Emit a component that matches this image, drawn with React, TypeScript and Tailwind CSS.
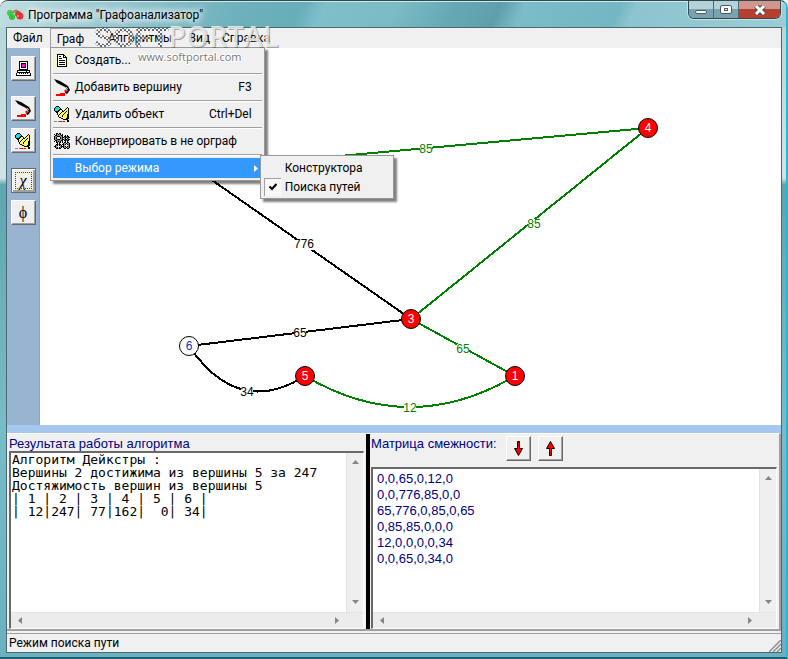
import { useState } from "react";
import type { ReactNode } from "react";

const PALETTE: Record<string, string> = {
  k: "#000000",
  w: "#ffffff",
  g: "#8a8a8a",
  d: "#404040",
  y: "#ffff4d",
  c: "#00e5e5",
  m: "#ff00ff",
  r: "#ff0000",
};

const PRINTER = [
  "...kkkkkkkkk...",
  "...kwwwwwwwk...",
  "...kwkkkkkwk...",
  "...kwkmmmkwk...",
  "...kwkmcmkwk...",
  "...kwkmmmkwk...",
  "...kwkkkkkwk...",
  "...kwwwwwwwk...",
  "...kkkkkkkkk...",
  ".kkkkkkkkkkkkk.",
  ".kwwwwwwwwkwwk.",
  ".kkkkkkkkkkkkk.",
  "kwwkwkwkwkwkwwk",
  "kwwwwwwwwwwwwwk",
  "kkkkkkkkkkkkkkk",
];

const ERASER = [
  "..kkk...........",
  ".kccck.......k..",
  "kccccck.....kyk.",
  "kcccckkk...kyyk.",
  "kccckkwyk.kyyyk.",
  ".kkkkwyykkyykyk.",
  "..kkwyykyyykyyk.",
  "...kyykyyykyyyk.",
  "...kykyyykyyykk.",
  "....kyyykyyyykk.",
  "....kwyykyyyykk.",
  ".....kkyyyyyykk.",
  ".......kkyyykkk.",
  ".........kkkkk..",
  ".............kk.",
  "ggg.grrrgrr..kk.",
];

const PAGE = [
  "y....y....y....y",
  ".y.kkkkkkk....y.",
  "..ykwwwwwkk..y..",
  "...kwkkwwkwk....",
  "...kwwwwwkkkk...",
  "yy.kwkkkwwwwk..y",
  "..ykwwwwwwwwkyy.",
  "...kwkkkkkkwk...",
  "..ykwwwwwwwwk...",
  "yy.kwkkkkkkwkyy.",
  "...kwwwwwwwwk..y",
  "...kwkkkkkkwk...",
  "..ykwwwwwwwwky..",
  ".y.kkkkkkkkkk.y.",
  "y....y...y.....y",
];

const GEARS = [
  "..kk.kk.........",
  "k.kgkgk.k.......",
  ".kkggggkk..k.k..",
  "kggkkkggk.kkgkk.",
  "kgk...kgkkgkkgkk",
  "kgk...kgk.gk.kg.",
  "kggkkkggkkgkkgkk",
  ".kkggggkk.kkgkk.",
  "k.kgkgk.k..k.k..",
  "..kk.kk.k.kk.kk.",
  "...k.k...kggkggk",
  "..kkgkk.kkgk.kgk",
  ".kgk.kgk.kg...gk",
  "kkg...gkkkgk.kgk",
  ".kgk.kgk.kggkggk",
  "..kkgkk...kk.kk.",
];

function PixelIcon({ rows }: { rows: string[] }) {
  return (
    <svg width={rows[0].length} height={rows.length} shapeRendering="crispEdges" aria-hidden="true">
      {rows.map((row, y) =>
        row
          .split("")
          .map((ch, x) => (ch === "." ? null : <rect key={`${x}-${y}`} x={x} y={y} width="1" height="1" fill={PALETTE[ch]} />)),
      )}
    </svg>
  );
}

function ArmIcon() {
  return (
    <svg width="17" height="17" aria-hidden="true">
      <path d="M0 0 L6 2 L14 7 L16 11 L13 15 L11 14 L13 10 L11 8 L3 4 Z" fill="#000" />
      <path d="M12 8 L14 10 L12 13" fill="none" stroke="#fff" strokeWidth="1" strokeDasharray="1 1" />
      <path d="M11 11 L12 13" stroke="#f00" strokeWidth="2" />
      <path d="M6 14 H11 V15 H6 Z M2 15 H11 V17 H2 Z" fill="#f00" />
    </svg>
  );
}

function BevelButton({ label, children, selected }: { label: string; children: ReactNode; selected?: boolean }) {
  return (
    <button
      aria-label={label}
      className={`flex h-[25px] w-[25px] shrink-0 items-center justify-center border bg-[#f0f0f0] ${
        selected
          ? "border-[#696969] shadow-[inset_1px_1px_0_#fff,inset_-2px_-2px_0_#a0a0a0]"
          : "border-t-white border-l-white border-r-[#696969] border-b-[#696969] shadow-[inset_-1px_-1px_0_#a0a0a0]"
      }`}
    >
      {children}
    </button>
  );
}

const NODES = [
  { id: 4, x: 608, y: 80, hit: true },
  { id: 3, x: 371, y: 271, hit: true },
  { id: 6, x: 149, y: 298, hit: false },
  { id: 5, x: 265, y: 328, hit: true },
  { id: 1, x: 475, y: 328, hit: true },
  { id: 2, x: 156, y: 121, hit: true },
];

const GREEN = "#008000";
const BLACK = "#000000";

const EDGES = [
  { d: "M156 121 L608 80", weight: "85", x: 386, y: 101, color: GREEN },
  { d: "M608 80 L371 271", weight: "85", x: 494, y: 176, color: GREEN },
  { d: "M156 121 L371 271", weight: "776", x: 264, y: 196, color: BLACK },
  { d: "M149 298 L371 271", weight: "65", x: 260, y: 285, color: BLACK },
  { d: "M371 271 L475 328", weight: "65", x: 423, y: 301, color: GREEN },
  { d: "M149 298 Q198 370 265 328", weight: "34", x: 207, y: 344, color: BLACK },
  { d: "M265 328 Q370 390 475 328", weight: "12", x: 370, y: 360, color: GREEN },
];

function GraphCanvas() {
  return (
    <svg className="h-full w-full bg-white font-['Liberation_Sans',sans-serif] text-xs" role="img" aria-label="Граф">
      {EDGES.map((e) => (
        <g key={e.d}>
          <path d={e.d} fill="none" stroke={e.color} strokeWidth="2" shapeRendering="crispEdges" />
          <rect x={e.x - e.weight.length * 3} y={e.y - 5} width={e.weight.length * 6} height="11" fill="#fff" />
          <text x={e.x} y={e.y + 4} textAnchor="middle" fill={e.color}>
            {e.weight}
          </text>
        </g>
      ))}
      {NODES.map((n) => (
        <g key={n.id}>
          <circle cx={n.x} cy={n.y} r="9.5" fill={n.hit ? "#ff0000" : "#fff"} stroke="#000" />
          <text x={n.x} y={n.y + 4} textAnchor="middle" fill={n.hit ? "#fff" : "#0033cc"}>
            {n.id}
          </text>
        </g>
      ))}
    </svg>
  );
}

function Arrow({ dir }: { dir: "up" | "down" | "left" | "right" }) {
  const points = {
    up: "0,5 7,5 3.5,1",
    down: "0,1 7,1 3.5,5",
    left: "5,0 5,7 1,3.5",
    right: "1,0 1,7 5,3.5",
  };
  return (
    <svg width="7" height="7" aria-hidden="true">
      <polygon points={points[dir]} fill="#858585" />
    </svg>
  );
}

function Memo({ label, value, className }: { label: string; value: string; className: string }) {
  return (
    <div className="flex min-h-0 flex-1 flex-col border-t-2 border-l-2 border-r border-b border-t-[#696969] border-l-[#696969] border-r-white border-b-white bg-white">
      <div className="flex min-h-0 flex-1">
        <textarea
          aria-label={label}
          readOnly
          wrap="off"
          defaultValue={value}
          className={`min-w-0 flex-1 resize-none overflow-hidden bg-white outline-none ${className}`}
        />
        <div className="flex w-[17px] flex-col items-center justify-between border-l border-[#e3e3e3] bg-[#efefef] py-1.5">
          <Arrow dir="up" />
          <Arrow dir="down" />
        </div>
      </div>
      <div className="flex h-4 shrink-0 items-center justify-between border-t border-[#e3e3e3] bg-[#ececec] pr-[22px] pl-1.5">
        <Arrow dir="left" />
        <Arrow dir="right" />
      </div>
    </div>
  );
}

function MenuItem({ icon, text, hotkey }: { icon: ReactNode; text: string; hotkey?: string }) {
  return (
    <button role="menuitem" className="flex h-5 w-full items-center pr-2.5 text-left">
      <span className="flex w-[22px] shrink-0 items-center pl-px">{icon}</span>
      <span className="flex-1 whitespace-nowrap">{text}</span>
      {hotkey && <span>{hotkey}</span>}
    </button>
  );
}

function Separator() {
  return (
    <div className="flex h-[7px] items-center">
      <div className="h-0.5 w-full border-t border-[#a0a0a0] bg-white" />
    </div>
  );
}

function GraphMenu({ mode, setMode }: { mode: string; setMode: (m: string) => void }) {
  return (
    <div
      role="menu"
      className="absolute top-full left-0 z-20 -mt-px w-[215px] border border-[#979797] bg-[#f0f0f0] p-0.5 shadow-[3px_3px_2px_#00000080]"
    >
      <MenuItem icon={<PixelIcon rows={PAGE} />} text="Создать..." />
      <Separator />
      <MenuItem icon={<ArmIcon />} text="Добавить вершину" hotkey="F3" />
      <Separator />
      <MenuItem icon={<PixelIcon rows={ERASER} />} text="Удалить объект" hotkey="Ctrl+Del" />
      <Separator />
      <MenuItem icon={<PixelIcon rows={GEARS} />} text="Конвертировать в не орграф" />
      <Separator />
      <div className="relative">
        <button role="menuitem" className="flex h-5 w-full items-center bg-[#3399ff] pr-1 pl-[22px] text-left text-white">
          <span className="flex-1">Выбор режима</span>
          <svg width="4" height="7" aria-hidden="true">
            <polygon points="0,0 4,3.5 0,7" fill="#fff" />
          </svg>
        </button>
        <div
          role="menu"
          className="absolute -top-[3px] left-[207px] w-[134px] border border-[#979797] bg-[#f0f0f0] p-0.5 shadow-[3px_3px_2px_#00000080]"
        >
          {["Конструктора", "Поиска путей"].map((name) => (
            <button
              key={name}
              role="menuitemradio"
              aria-checked={mode === name}
              onClick={() => setMode(name)}
              className="flex h-[19px] w-full items-center gap-1 text-left"
            >
              <span
                className={`ml-px flex h-[18px] w-[17px] items-center justify-center ${
                  mode === name ? "border-t border-l border-[#a0a0a0] bg-[#f8f8f8]" : ""
                }`}
              >
                {mode === name && (
                  <svg width="8" height="8" aria-hidden="true">
                    <path d="M0.5 3.5 L3 6 L7.5 1" fill="none" stroke="#000" strokeWidth="2" />
                  </svg>
                )}
              </span>
              <span className="whitespace-nowrap">{name}</span>
            </button>
          ))}
        </div>
      </div>
    </div>
  );
}

function Watermark() {
  return (
    <svg className="pointer-events-none absolute top-5 left-[92px] z-30 overflow-visible" width="192" height="46" aria-hidden="true">
      <defs>
        <pattern id="dots" width="4" height="4" patternUnits="userSpaceOnUse">
          <rect width="4" height="4" fill="#fff" fillOpacity="0.6" />
          <rect width="2" height="2" fill="#5f6669" />
          <rect x="2" y="2" width="2" height="2" fill="#5f6669" />
        </pattern>
      </defs>
      <text x="2" y="26" fill="url(#dots)" className="font-['Liberation_Sans',sans-serif] text-[28px] font-bold">
        SOFT
      </text>
      <g className="font-['Open_Sans',sans-serif] text-[29px] font-semibold">
        <text x="77" y="27" fill="#555" fillOpacity="0.5">
          PORTAL
        </text>
        <text x="76" y="26" fill="#f4f6f6" fillOpacity="0.8">
          PORTAL
        </text>
      </g>
      <text
        x="46"
        y="40"
        className="font-['Open_Sans',sans-serif] text-[11px]"
        fill="#777"
        stroke="#fff"
        strokeWidth="2"
        paintOrder="stroke"
      >
        www.softportal.com
      </text>
    </svg>
  );
}

function TitleBar() {
  return (
    <header className="-mr-1 -ml-1.5 flex h-[26px] shrink-0 items-start justify-between rounded-t-lg border-t border-[#d5e8ea] bg-[linear-gradient(115deg,#c4dee1_0%,#9ccbd2_12%,#6fb1bc_30%,#68adb9_38%,#7fbfca_41%,#7bbbc6_50%,#66a9b4_57%,#5f9fab_63%,#7bbcc8_66%,#74b6c3_78%,#8cc4cf_80%,#9ccdd5_100%)] pl-[7px]">
      <div className="flex h-full items-center gap-1">
        <svg width="17" height="14" aria-hidden="true">
          <circle cx="3" cy="5" r="3" fill="#3ccf3c" />
          <circle cx="5" cy="9" r="3" fill="#35c235" />
          <path d="M6 5 Q9 0 12 5" fill="none" stroke="#c07050" strokeWidth="2" />
          <circle cx="11" cy="6" r="3" fill="#c04a3a" />
          <circle cx="13" cy="8" r="3.5" fill="#e03030" />
          <circle cx="11" cy="8" r="1" fill="#ff9a9a" />
        </svg>
        <h1 className="whitespace-nowrap [text-shadow:0_0_6px_#fff,0_0_8px_#fff,0_0_10px_#fff]">Программа "Графоанализатор"</h1>
      </div>
      <div className="mr-[5px] -mt-px flex h-[18px] overflow-hidden rounded-b-md border border-t-0 border-[#34474d] shadow-[0_0_0_1px_#c5e1e6]">
        <button
          aria-label="Свернуть"
          className="flex w-[25px] items-center justify-center border-r border-[#4d6a72] bg-linear-to-b from-[#b5d2d8] from-50% to-[#78a3ae] to-50%"
        >
          <span className="mt-1 h-1 w-3 rounded-xs border border-[#4c5a60] bg-white" />
        </button>
        <button
          aria-label="Развернуть"
          className="flex w-[25px] items-center justify-center border-r border-[#4d6a72] bg-linear-to-b from-[#b5d2d8] from-50% to-[#78a3ae] to-50%"
        >
          <span className="flex h-[9px] w-3 items-center justify-center rounded-xs border border-[#4c5a60] bg-white">
            <span className="h-[3px] w-1 border border-[#4c5a60]" />
          </span>
        </button>
        <button
          aria-label="Закрыть"
          className="flex w-[41px] items-center justify-center bg-linear-to-b from-[#d3968c] from-50% to-[#b5402f] to-50%"
        >
          <svg width="12" height="10" aria-hidden="true">
            <path d="M2 1 L10 9 M10 1 L2 9" stroke="#4c4c55" strokeWidth="5" />
            <path d="M2 1 L10 9 M10 1 L2 9" stroke="#fff" strokeWidth="3" />
          </svg>
        </button>
      </div>
    </header>
  );
}

const RESULT = `Алгоритм Дейкстры :
Вершины 2 достижима из вершины 5 за 247
Достяжимость вершин из вершины 5
| 1 | 2 | 3 | 4 | 5 | 6 |
| 12|247| 77|162|  0| 34|`;

const MATRIX = `0,0,65,0,12,0
0,0,776,85,0,0
65,776,0,85,0,65
0,85,85,0,0,0
12,0,0,0,0,34
0,0,65,0,34,0`;

export default function App() {
  const [menuOpen, setMenuOpen] = useState(true);
  const [mode, setMode] = useState("Поиска путей");

  return (
    <div className="relative flex h-screen flex-col overflow-hidden rounded-t-lg border-t border-r-2 border-b-2 border-t-[#2b4a50] border-r-[#1fb9dd] border-b-[#1b5f70] bg-[linear-gradient(to_bottom,#b4d4d8_0%,#cfe4e6_27%,#5fa5b0_28%,#78bcc8_65%,#6ab0be_100%)] pr-1 pb-1 pl-1.5 font-[Roboto,'Noto_Sans',sans-serif] text-xs text-black">
      <TitleBar />
      <div className="flex min-h-0 flex-1 flex-col border border-[#4a6a72] bg-[#f0f0f0]">
        <nav className="flex h-5 shrink-0 items-stretch">
          <button className="pr-[7px] pl-1.5">Файл</button>
          <div className="relative">
            <button
              onClick={() => setMenuOpen(!menuOpen)}
              className="h-full border-t border-l border-[#a0a0a0] pr-3 pl-1.5"
            >
              Граф
            </button>
            {menuOpen && <GraphMenu mode={mode} setMode={setMode} />}
          </div>
          <button className="pr-2 pl-3">Алгоритмы</button>
          <button className="px-2">Вид</button>
          <button className="px-1">Справка</button>
        </nav>

        <div className="flex min-h-0 flex-1">
          <aside className="flex w-[33px] shrink-0 flex-col items-center gap-[7px] border-r border-[#a0a0a0] bg-[#99b4d1] pt-2">
            <BevelButton label="Печать">
              <PixelIcon rows={PRINTER} />
            </BevelButton>
            <div className="mt-2">
              <BevelButton label="Добавить вершину">
                <ArmIcon />
              </BevelButton>
            </div>
            <BevelButton label="Удалить объект">
              <PixelIcon rows={ERASER} />
            </BevelButton>
            <div className="mt-2">
              <BevelButton label="Хроматическое число" selected>
                <span className="flex h-[17px] w-[17px] items-center justify-center border border-dotted border-black font-['Liberation_Serif',serif] text-base leading-none italic outline-1 -outline-offset-1 outline-[#ffff00]/30">
                  χ
                </span>
              </BevelButton>
            </div>
            <BevelButton label="Число независимости">
              <span className="font-['Liberation_Serif','DejaVu_Serif',serif] text-base leading-none">ϕ</span>
            </BevelButton>
          </aside>
          <main className="min-w-0 flex-1">
            <GraphCanvas />
          </main>
        </div>

        <div className="h-2 shrink-0 bg-[#a4c8f0]" />

        <div className="flex h-[198px] shrink-0 border-t border-r-2 border-b-2 border-t-white border-r-[#a0a0a0] border-b-[#a0a0a0] font-['Liberation_Sans',sans-serif] text-[13px] text-[#000080]">
          <section className="flex w-[359px] shrink-0 flex-col pr-0.5 pl-0.5">
            <h2 className="h-[17px] leading-5">Результата работы алгоритма</h2>
            <Memo
              label="Результата работы алгоритма"
              value={RESULT}
              className="px-px font-['DejaVu_Sans_Mono',monospace] text-[13px] leading-[13px] text-black"
            />
          </section>
          <div className="w-1 shrink-0 bg-black" />
          <section className="flex min-w-0 flex-1 flex-col pr-0.5 pl-px">
            <div className="flex h-[33px] items-start gap-[7px] pt-0.5">
              <h2 className="mr-0.5 leading-4">Матрица смежности:</h2>
              <BevelButton label="Загрузить матрицу">
                <svg width="9" height="15" aria-hidden="true">
                  <path d="M3.5 0.5 h2 v7 h3 l-4 7 l-4 -7 h3 z" fill="#f00" stroke="#000" />
                </svg>
              </BevelButton>
              <BevelButton label="Применить матрицу">
                <svg width="9" height="15" aria-hidden="true">
                  <path d="M3.5 14.5 h2 v-7 h3 l-4 -7 l-4 7 h3 z" fill="#f00" stroke="#000" />
                </svg>
              </BevelButton>
            </div>
            <Memo
              label="Матрица смежности"
              value={MATRIX}
              className="px-1 py-0.5 font-['Liberation_Sans',sans-serif] text-[13px] leading-4 text-[#000080]"
            />
          </section>
        </div>

        <footer className="mt-0.5 flex h-[19px] shrink-0 items-center justify-between border-t border-[#a0a0a0] pl-0.5">
          <span>Режим поиска пути</span>
          <svg width="12" height="12" className="self-end" aria-hidden="true">
            <path d="M0 12 L12 0 M4 12 L12 4 M8 12 L12 8" stroke="#8c8c8c" strokeWidth="1.5" />
          </svg>
        </footer>
      </div>
      <Watermark />
    </div>
  );
}
